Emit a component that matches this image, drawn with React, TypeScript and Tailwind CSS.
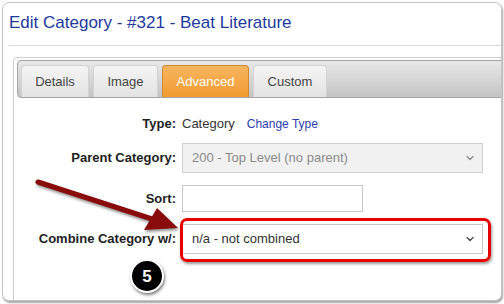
import { ChevronDown } from 'lucide-react';

const tabs = [
  { label: 'Details', w: 'w-[68px]', active: false },
  { label: 'Image', w: 'w-[65px]', active: false },
  { label: 'Advanced', w: 'w-[87px]', active: true },
  { label: 'Custom', w: 'w-[74px]', active: false },
];

function Row({ label, h, children }: { label: string; h: string; children: React.ReactNode }) {
  return (
    <div className={`flex items-center ${h}`}>
      <div className="w-[163px] pr-[1px] text-right text-[13px] font-bold text-[#222]">{label}</div>
      <div className="ml-[5px] flex items-center h-full">{children}</div>
    </div>
  );
}

export default function App() {
  return (
    <div className="relative w-[504px] h-[304px] bg-white overflow-hidden font-['Liberation_Sans',Arial,sans-serif]">
      {/* Screenshot frame */}
      <div className="ml-[2px] mt-[2px] w-[500px] h-[299px] border border-[#c4c4c4] rounded-[7px] overflow-hidden bg-white shadow-[1px_2px_2px_rgba(0,0,0,0.35)]">
        {/* Title */}
        <div className="ml-[6px] pt-[10px] pb-[12px] border-b border-[#dcdcdc]">
          <h1 className="text-[17px] leading-[20px] text-[#22399c]">Edit Category - #321 - Beat Literature</h1>
        </div>

        {/* Panel */}
        <div className="ml-[10px] mt-[11px] w-[520px] h-[260px] border border-[#cfcfcf] rounded-[4px] pl-[3px] pt-[2px]">
          {/* Tab bar */}
          <div className="h-[38px] border border-[#a4a4a4] rounded-[4px] bg-linear-to-b from-[#e8e8e8] to-[#c4c4c4] pl-[3px] pt-[4px] flex items-end gap-[4px]">
            {tabs.map(tab => (
              <div
                key={tab.label}
                className={
                  tab.active
                    ? `${tab.w} h-[32px] flex items-center justify-center rounded-t-[4px] border border-b-0 border-[#cf8a34] bg-linear-to-b from-[#f6b55e] to-[#f29b2e] text-white text-[13px]`
                    : `${tab.w} h-[32px] flex items-center justify-center rounded-t-[4px] border border-b-0 border-[#d2d2d2] bg-linear-to-b from-[#f5f5f5] to-[#e2e2e2] text-[#454545] text-[13px]`
                }
              >
                {tab.label}
              </div>
            ))}
          </div>

          {/* Form */}
          <div className="pt-[16px] -ml-[3px]">
            <Row label="Type:" h="h-[20px]">
              <span className="text-[13px] text-[#333]">Category</span>
              <span className="ml-[12px] text-[12px] text-[#2c40b0]">Change Type</span>
            </Row>
            <div className="mt-[9px]">
              <Row label="Parent Category:" h="h-[30px]">
                <div className="w-[301px] h-[30px] border border-[#d0d0d0] bg-[#f1f1f1] flex items-center pl-[9px] pr-[6px]">
                  <span className="flex-1 text-[13px] text-[#8a8a8a]">200 - Top Level (no parent)</span>
                  <ChevronDown className="w-[12px] h-[12px] text-[#888]" strokeWidth={2.5} />
                </div>
              </Row>
            </div>
            <div className="mt-[12px]">
              <Row label="Sort:" h="h-[27px]">
                <div className="w-[181px] h-[27px] border border-[#c8c8c8] bg-white" />
              </Row>
            </div>
            <div className="mt-[12px]">
              <Row label="Combine Category w/:" h="h-[30px]">
                <div className="w-[301px] h-[30px] border border-[#c8c8c8] bg-white flex items-center pl-[9px] pr-[6px]">
                  <span className="flex-1 text-[13px] text-[#333]">n/a - not combined</span>
                  <ChevronDown className="w-[12px] h-[12px] text-[#444]" strokeWidth={2.5} />
                </div>
              </Row>
            </div>
          </div>
        </div>
      </div>

      {/* Annotation: red highlight box */}
      <div className="absolute left-[180px] top-[218px] w-[311px] h-[44px] border-[3px] border-[#e60000] rounded-[7px] shadow-[1px_2px_3px_rgba(0,0,0,0.4)]" />

      {/* Annotation: arrow */}
      <svg className="absolute left-0 top-0 drop-shadow-[1px_2px_1.5px_rgba(0,0,0,0.45)]" width="504" height="304" viewBox="0 0 504 304">
        <line x1="38" y1="182" x2="152" y2="219" stroke="#8a0b0b" strokeWidth="5" strokeLinecap="round" />
        <polygon points="178,228 144,230 157,208" fill="#8a0b0b" />
      </svg>

      {/* Annotation: step number */}
      <div className="absolute left-[130px] top-[259px] w-[34px] h-[34px] rounded-full bg-black border-2 border-white shadow-[1px_2px_3px_rgba(0,0,0,0.5)] flex items-center justify-center">
        <span className="text-white text-[17px] font-bold leading-none">5</span>
      </div>
    </div>
  );
}
